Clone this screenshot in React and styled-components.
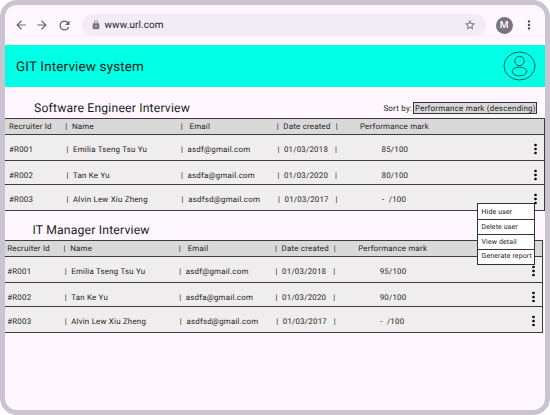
import React from "react";
import styled, { createGlobalStyle } from "styled-components";
import { MdArrowBack, MdArrowForward, MdRefresh, MdLock, MdStarBorder, MdMoreVert } from "react-icons/md";

const GlobalStyle = createGlobalStyle`
  *, *::before, *::after { box-sizing: border-box; }
  body { margin: 0; background: #fff; font-family: Roboto, "Liberation Sans", sans-serif; color: #1d1b20; text-rendering: geometricPrecision; }
  svg { display: block; flex: none; }
`;

const Frame = styled.div`
  width: 550px;
  height: 415px;
  border: 5px solid #cac4d0;
  border-radius: 17px;
  background: #fef7ff;
  overflow: hidden;
`;

const BrowserBar = styled.div`
  height: 40px;
  display: flex;
  align-items: center;
  color: #49454f;
  padding-left: 9px;
`;

const NavIcons = styled.div`
  display: flex;
  gap: 7.3px;
  width: 67.5px;
  color: #68646d;
`;

const AddressBar = styled.div`
  width: 404px;
  height: 22px;
  border-radius: 11px;
  background: #f2ecf6;
  display: flex;
  align-items: center;
  padding: 0 10px 0 9px;
  margin-right: 10px;
`;

const Url = styled.span`
  flex: 1;
  margin-left: 4px;
  padding-top: 2px;
  font-size: 10px;
  line-height: 20px;
  letter-spacing: 0.08px;
  color: #1d1b20;
`;

const Avatar = styled.div`
  width: 17px;
  height: 17px;
  border-radius: 50%;
  background: #79747e;
  color: #fff;
  font-size: 10px;
  font-weight: 500;
  line-height: 17px;
  text-align: center;
  margin-right: 9px;
`;

const AppHeader = styled.header`
  height: 42px;
  background: #00ffe5;
  display: flex;
  align-items: center;
  justify-content: space-between;
  padding: 0 9px 0 11px;
`;

const AppTitle = styled.h1`
  margin: 3px 0 0;
  font-size: 13.4px;
  font-weight: 400;
  letter-spacing: 0.18px;
  line-height: 20px;
`;

const SectionHead = styled.div`
  display: flex;
  justify-content: space-between;
  height: ${(p) => p.$height}px;
  padding: ${(p) => p.$top}px 8px 0 ${(p) => p.$left}px;
`;

const SectionTitle = styled.h2`
  margin: 0;
  font-size: 12.2px;
  font-weight: 400;
  letter-spacing: 0.18px;
  line-height: 16px;
  white-space: nowrap;
`;

const Sort = styled.div`
  display: flex;
  height: 12px;
  margin-top: 2px;
  font-size: 8px;
  line-height: 13px;
  letter-spacing: 0.2px;
  white-space: nowrap;
`;

const SortValue = styled.span`
  width: 124px;
  height: 12px;
  line-height: 12px;
  padding-left: 1px;
  margin-left: 1px;
  border: 1px solid #333;
  background: #d9d9d9;
`;

const Table = styled.div`
  width: ${(p) => p.$width}px;
  border: solid #3c3c3c;
  border-width: 1px 1px 0 0;
`;

const Row = styled.div`
  height: ${(p) => p.$height}px;
  border-bottom: 1px solid #3c3c3c;
  background: ${(p) => (p.$head ? "#d9d9d9" : "#efedee")};
  display: grid;
  grid-template-columns: ${(p) => p.$columns};
  padding: ${(p) => p.$top}px 0 0 ${(p) => p.$left}px;
  font-size: 7.9px;
  line-height: 10px;
  letter-spacing: 0.22px;
  white-space: pre;
`;

const More = styled.span`
  color: #000;
  height: 10px;
  display: flex;
  align-items: center;
  margin-top: -1px;
`;

const MenuAnchor = styled.div`
  position: relative;
  height: 0;
`;

const Menu = styled.div`
  position: absolute;
  left: 472px;
  top: -8px;
  width: 58px;
  border: 1px solid #333;
  background: #fff;
  z-index: 2;
`;

const MenuItem = styled.div`
  height: ${(p) => p.$height}px;
  padding-left: 3.5px;
  padding-top: 2px;
  font-size: 7px;
  line-height: 13px;
  letter-spacing: 0.12px;
  white-space: nowrap;
  & + & { border-top: 1px solid #333; padding-top: 1px; }
  &:last-child { padding-top: 0; }
`;

const HEAD_X = [9, 65.3, 72, 180.7, 189.5, 276.9, 283.4, 335.7, 360, 532];
const ROW_X = [9, 66.5, 73, 181, 187.5, 277.4, 283.9, 335, 381.5, 532];
const WIDE_X = [9, 66.5, 73, 181.6, 188.3, 278, 284.6, 335.6, 382, 532];

const toColumns = (xs) => xs.slice(1).map((x, i) => `${(x - xs[i]).toFixed(1)}px`).join(" ") + " 8px";

function Dots() {
  return (
    <More>
      <svg width="7" height="12" viewBox="0 0 7 12">
        {[1.5, 5.5, 9.5].map((y) => <circle key={y} cx="3.5" cy={y + 0.5} r="1.3" fill="#000" />)}
      </svg>
    </More>
  );
}

function DataRow({ xs, offset, values, height, top, head }) {
  return (
    <Row $head={head} $height={height} $top={top} $left={4 - offset} $columns={toColumns(xs)}>
      <span>{values[0]}</span><span>|</span>
      <span>{values[1]}</span><span>|</span>
      <span>{values[2]}</span><span>|</span>
      <span>{values[3]}</span><span>|</span>
      <span>{values[4]}</span>
      {!head && <Dots />}
    </Row>
  );
}

function InterviewTable({ width, offset, marks }) {
  return (
    <Table $width={width}>
      <DataRow head xs={HEAD_X} offset={offset} height={16} top={3}
        values={["Recruiter Id", "Name", "Email", "Date created", "Performance mark"]} />
      <DataRow xs={ROW_X} offset={offset} height={26} top={10}
        values={["#R001", "Emilia Tseng Tsu Yu", "asdf@gmail.com", "01/03/2018", marks[0]]} />
      <DataRow xs={ROW_X} offset={offset} height={24} top={10}
        values={["#R002", "Tan Ke Yu", "asdfa@gmail.com", "01/03/2020", marks[1]]} />
      <DataRow xs={WIDE_X} offset={offset} height={26} top={10}
        values={["#R003", "Alvin Lew Xiu Zheng", "asdfsd@gmail.com", "01/03/2017", "-  /100"]} />
    </Table>
  );
}

export default function App() {
  return (
    <>
      <GlobalStyle />
      <Frame>
        <BrowserBar>
          <NavIcons>
            <MdArrowBack size={14} /><MdArrowForward size={14} /><MdRefresh size={15} />
          </NavIcons>
          <AddressBar>
            <MdLock size={10} color="#79747e" />
            <Url>www.url.com</Url>
            <MdStarBorder size={12} color="#68646d" />
          </AddressBar>
          <Avatar>M</Avatar>
          <MdMoreVert size={14} />
        </BrowserBar>
        <AppHeader>
          <AppTitle>GIT Interview system</AppTitle>
          <svg width="33" height="30" viewBox="0 0 33 30" fill="none" stroke="#125f59" strokeWidth="1">
            <ellipse cx="16.5" cy="15" rx="15.5" ry="14" />
            <circle cx="16.5" cy="10" r="4.7" />
            <ellipse cx="16.5" cy="20.5" rx="7.2" ry="4.4" />
          </svg>
        </AppHeader>
        <SectionHead $height={31} $top={13} $left={29}>
          <SectionTitle>Software Engineer Interview</SectionTitle>
          <Sort>Sort by:<SortValue>Performance mark (descending)</SortValue></Sort>
        </SectionHead>
        <InterviewTable width={540} offset={0} marks={["85/100", "80/100"]} />
        <MenuAnchor>
          <Menu>
            <MenuItem $height={15}>Hide user</MenuItem>
            <MenuItem $height={15}>Delete user</MenuItem>
            <MenuItem $height={15}>View detail</MenuItem>
            <MenuItem $height={15}>Generate report</MenuItem>
          </Menu>
        </MenuAnchor>
        <SectionHead $height={29} $top={11} $left={27.5}>
          <SectionTitle>IT Manager Interview</SectionTitle>
        </SectionHead>
        <InterviewTable width={538} offset={1.8} marks={["95/100", "90/100"]} />
      </Frame>
    </>
  );
}
